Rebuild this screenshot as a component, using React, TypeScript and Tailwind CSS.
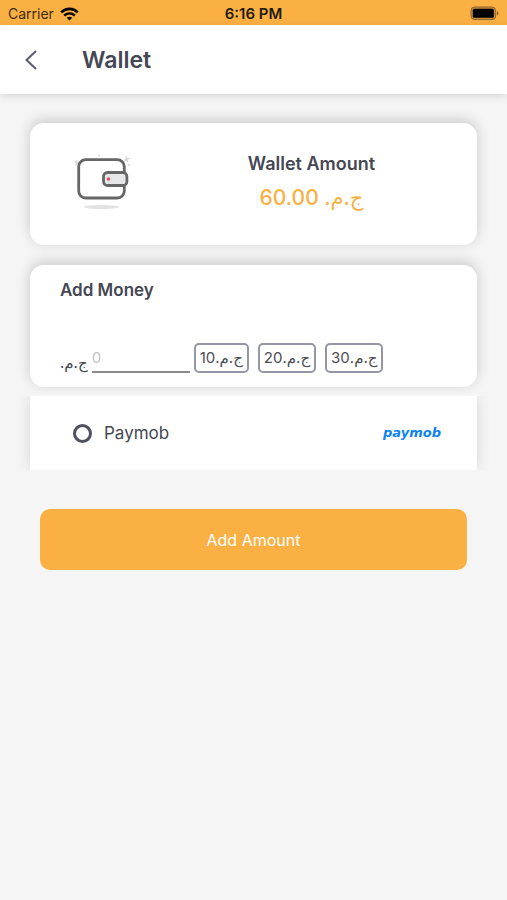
import { useState } from "react";

const CURRENCY = "ج.م.";
const QUICK_AMOUNTS = [10, 20, 30];

const cardShadow = "shadow-[0_-3px_14px_rgba(0,0,0,0.18)]";

function StatusBar() {
  return (
    <div className="grid h-[25px] grid-cols-3 items-center bg-[#fbb043] px-2 pt-0.5 text-black">
      <div className="flex items-center gap-1.5 text-[14px] leading-5 text-[#3d2c12]">
        Carrier
        <svg width="19" height="14" viewBox="0 0 19 14" fill="none" stroke="#000" strokeWidth="2.6" aria-hidden="true">
          <path d="M1.2 5.4C6 .7 13 .7 17.8 5.4" />
          <path d="M4.2 8.6c3.1-2.8 7.5-2.8 10.6 0" />
          <path d="M9.5 13.6 6.7 10.8c1.6-1.4 4-1.4 5.6 0Z" fill="#000" stroke="none" />
        </svg>
      </div>
      <div className="text-center text-[15px] font-semibold leading-5 text-[#241a0a]">6:16 PM</div>
      <svg className="justify-self-end" width="29" height="15" viewBox="0 0 29 15" aria-hidden="true">
        <rect x="1" y="1" width="24.6" height="12.6" rx="3.6" fill="#c58c3a" stroke="#8d672f" strokeWidth="1" />
        <rect x="2.8" y="2.8" width="21" height="9" rx="1.5" fill="#000" />
        <path d="M26.8 5v4.6c2.2-.8 2.2-3.8 0-4.6Z" fill="#8d672f" />
      </svg>
    </div>
  );
}

function WalletIcon() {
  return (
    <svg width="60" height="60" viewBox="0 0 60 60" fill="none" aria-hidden="true">
      <ellipse cx="29.5" cy="54" rx="17.5" ry="2" fill="#e2e2e2" />
      <g fill="#d8d8d8">
        <path d="m4 7 2 2 2-1-1 3 1 2-3-1-2 1 1-3-2-1 2-1Z" />
        <path d="m54 3 1 2 3 0-2 2 0 2-2-1-2 1 1-3Z" />
        <circle cx="27" cy="2.5" r="1" />
        <circle cx="57" cy="12" r="1" />
      </g>
      <rect x="6.7" y="6.6" width="45.6" height="38.4" rx="7" fill="#fff" stroke="#666" strokeWidth="2.8" />
      <rect x="31.5" y="19.5" width="23.4" height="13" rx="4" fill="#e6e6e9" stroke="#666" strokeWidth="2.8" />
      <circle cx="36.5" cy="26" r="1.8" fill="#d5546b" />
    </svg>
  );
}

export default function App() {
  const [amount, setAmount] = useState("");

  return (
    <div className="min-h-screen bg-[#f5f5f5] font-[Inter,'DejaVu_Sans',sans-serif] text-[#454753]">
      <StatusBar />
      <header className="flex h-[69px] items-center gap-[39px] bg-white px-[18px] shadow-[0_2px_8px_rgba(0,0,0,0.13)]">
        <button type="button" aria-label="Back" className="flex size-[25px] items-center justify-center">
          <svg width="14" height="20" viewBox="0 0 14 20" fill="none" stroke="#5b5d73" strokeWidth="2" aria-hidden="true">
            <path d="M12 1 2.5 10 12 19" />
          </svg>
        </button>
        <h1 className="text-[23px] font-semibold leading-8">Wallet</h1>
      </header>

      <main className="px-[30px] pt-[29px]">
        <section className={`flex h-[122px] items-start rounded-[14px] bg-white ${cardShadow}`}>
          <div className="pl-[42px] pt-[30px]">
            <WalletIcon />
          </div>
          <div className="flex-1 pl-[14px] pt-[29px] text-center">
            <h2 className="text-[18px] font-semibold leading-6">Wallet Amount</h2>
            <p dir="rtl" className="mt-1.5 text-[21px] font-medium leading-8 text-[#fbb043]">
              {CURRENCY} 60.00
            </p>
          </div>
        </section>

        <section className={`mt-5 h-[122px] rounded-[14px] bg-white px-[30px] pt-[13px] ${cardShadow}`}>
          <h2 className="text-[17px] font-semibold leading-6">Add Money</h2>
          <div className="mt-[41px] flex items-center">
            <label htmlFor="amount" dir="rtl" className="pt-2.5 text-[15px] leading-5">
              {CURRENCY}
            </label>
            <input
              id="amount"
              inputMode="numeric"
              placeholder="0"
              value={amount}
              onChange={(e) => setAmount(e.target.value)}
              className="ml-1 h-[30px] w-[98px] border-b-2 border-[#8a8a8a] text-[15px] outline-none placeholder:text-[#c4c4c6]"
            />
            <div className="ml-1 flex gap-[9px]">
              {QUICK_AMOUNTS.map((value) => (
                <button
                  key={value}
                  type="button"
                  dir="rtl"
                  onClick={() => setAmount(String(value))}
                  className="h-[30px] rounded-[5px] border-2 border-[#9496a8] px-1 text-[15px] leading-5 text-[#4d4e55]"
                >
                  {CURRENCY}
                  {value}
                </button>
              ))}
            </div>
          </div>
        </section>

        <div className="mt-[9px] overflow-y-clip">
          <label className="flex h-[74px] items-center bg-white pl-[43px] pr-9 shadow-[0_0_14px_rgba(0,0,0,0.12)]">
            <input
              type="radio"
              name="method"
              value="paymob"
              className="size-[19px] appearance-none rounded-full border-[3px] border-[#4f515e] checked:border-[6px]"
            />
            <span className="ml-3 text-[17px] leading-6">Paymob</span>
            <span
              className="ml-auto font-['DejaVu_Sans',sans-serif] text-[13px] font-bold italic leading-5 text-[#0c83f2]"
              aria-hidden="true"
            >
              paymob
            </span>
          </label>
        </div>

        <div className="px-2.5 pt-[39px]">
          <button type="button" className="h-[61px] w-full rounded-[10px] bg-[#fbb043] text-[16px] text-white">
            Add Amount
          </button>
        </div>
      </main>
    </div>
  );
}
